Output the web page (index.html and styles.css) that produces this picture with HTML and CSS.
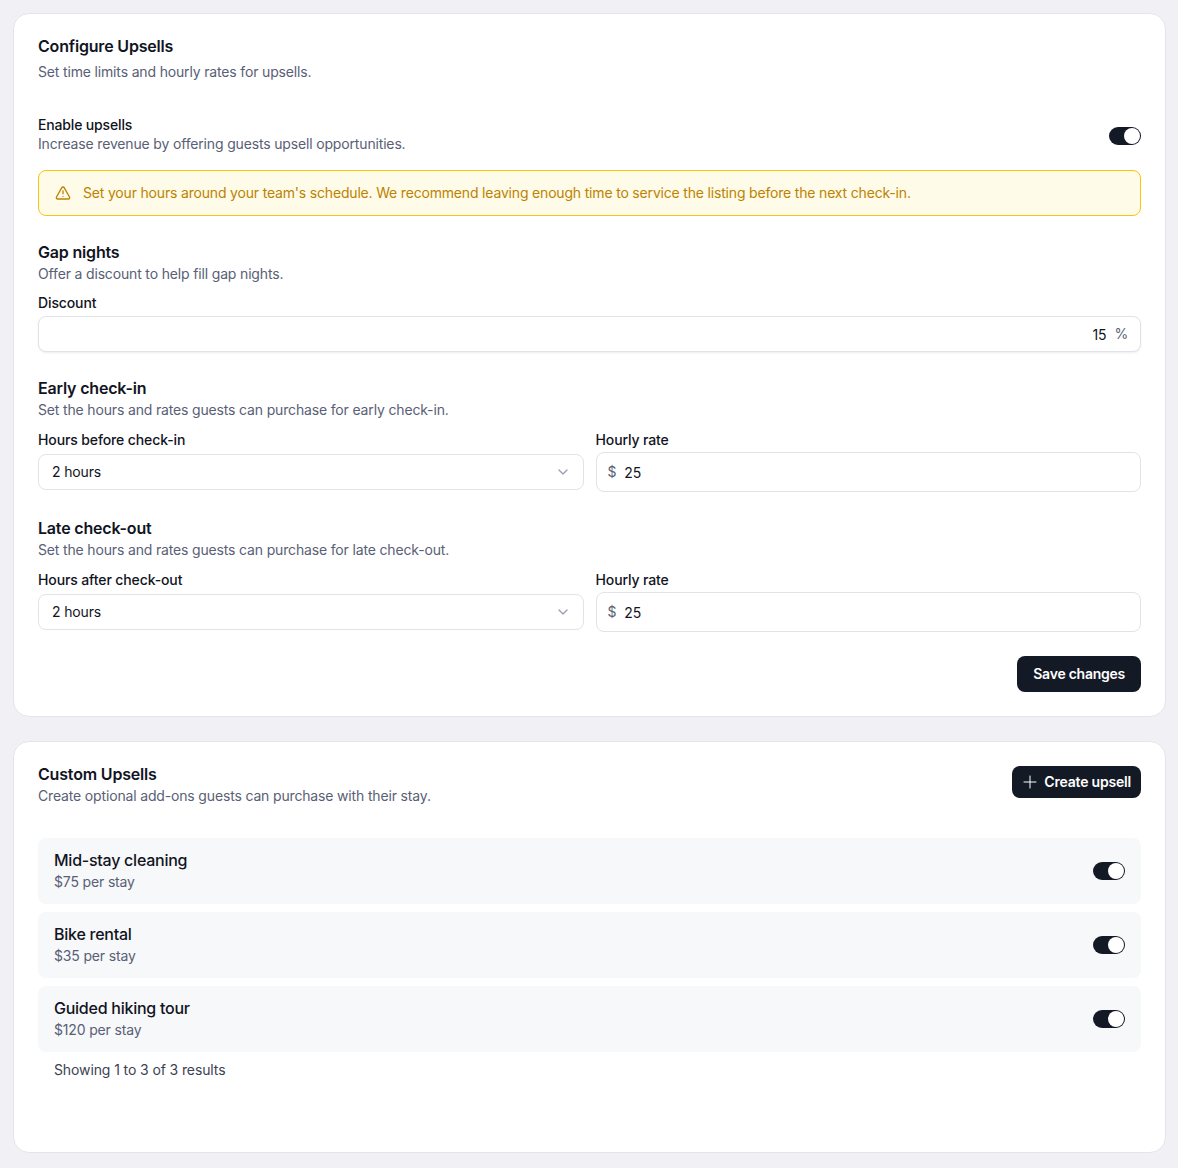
FILE: index.html
```html
<!DOCTYPE html>
<html lang="en">
<head>
  <meta charset="UTF-8">
  <meta name="viewport" content="width=device-width, initial-scale=1.0">
  <title>Upsells</title>
  <link rel="stylesheet" href="styles.css">
</head>
<body>
  <div class="card card-config">
    <div class="card-title">Configure Upsells</div>
    <div class="card-desc">Set time limits and hourly rates for upsells.</div>

    <div class="enable-row">
      <div>
        <div class="enable-title">Enable upsells</div>
        <div class="muted">Increase revenue by offering guests upsell opportunities.</div>
      </div>
      <span class="toggle toggle-enable"><span class="knob"></span></span>
    </div>

    <div class="alert">
      <svg class="alert-icon" width="16" height="16" viewBox="0 0 24 24" fill="none" stroke="currentColor" stroke-width="2" stroke-linecap="round" stroke-linejoin="round">
        <path d="M21.73 18l-8-14a2 2 0 0 0-3.48 0l-8 14A2 2 0 0 0 4 21h16a2 2 0 0 0 1.73-3z"></path>
        <path d="M12 9v4"></path>
        <path d="M12 17h.01"></path>
      </svg>
      <span>Set your hours around your team's schedule. We recommend leaving enough time to service the listing before the next check-in.</span>
    </div>

    <div class="section">
      <div class="section-title">Gap nights</div>
      <div class="muted">Offer a discount to help fill gap nights.</div>
      <div class="label">Discount</div>
      <div class="input input-discount">
        <span class="value value-low">15</span>
        <span class="unit">%</span>
      </div>
    </div>

    <div class="section">
      <div class="section-title">Early check-in</div>
      <div class="muted">Set the hours and rates guests can purchase for early check-in.</div>
      <div class="field-grid">
        <div>
          <div class="label label-select">Hours before check-in</div>
          <div class="select">
            <span class="value">2 hours</span>
            <svg class="chevron" width="16" height="16" viewBox="0 0 24 24" fill="none" stroke="currentColor" stroke-width="2" stroke-linecap="round" stroke-linejoin="round"><path d="M6 9l6 6 6-6"></path></svg>
          </div>
        </div>
        <div>
          <div class="label label-rate">Hourly rate</div>
          <div class="input input-rate">
            <span class="unit">$</span>
            <span class="value value-low">25</span>
          </div>
        </div>
      </div>
    </div>

    <div class="section">
      <div class="section-title">Late check-out</div>
      <div class="muted">Set the hours and rates guests can purchase for late check-out.</div>
      <div class="field-grid">
        <div>
          <div class="label label-select">Hours after check-out</div>
          <div class="select">
            <span class="value">2 hours</span>
            <svg class="chevron" width="16" height="16" viewBox="0 0 24 24" fill="none" stroke="currentColor" stroke-width="2" stroke-linecap="round" stroke-linejoin="round"><path d="M6 9l6 6 6-6"></path></svg>
          </div>
        </div>
        <div>
          <div class="label label-rate">Hourly rate</div>
          <div class="input input-rate">
            <span class="unit">$</span>
            <span class="value value-low">25</span>
          </div>
        </div>
      </div>
    </div>

    <div class="actions">
      <button class="btn btn-save">Save changes</button>
    </div>
  </div>

  <div class="card card-custom">
    <div class="custom-head">
      <div>
        <div class="card-title">Custom Upsells</div>
        <div class="muted">Create optional add-ons guests can purchase with their stay.</div>
      </div>
      <button class="btn btn-create">
        <svg class="plus" width="16" height="16" viewBox="0 0 24 24" fill="none" stroke="currentColor" stroke-width="1.5" stroke-linecap="round"><path d="M12 3v18"></path><path d="M3 12h18"></path></svg>
        Create upsell
      </button>
    </div>

    <div class="upsell-list">
      <div class="upsell">
        <div>
          <div class="upsell-name">Mid-stay cleaning</div>
          <div class="muted">$75 per stay</div>
        </div>
        <span class="toggle"><span class="knob"></span></span>
      </div>
      <div class="upsell">
        <div>
          <div class="upsell-name">Bike rental</div>
          <div class="muted">$35 per stay</div>
        </div>
        <span class="toggle"><span class="knob"></span></span>
      </div>
      <div class="upsell">
        <div>
          <div class="upsell-name">Guided hiking tour</div>
          <div class="muted">$120 per stay</div>
        </div>
        <span class="toggle"><span class="knob"></span></span>
      </div>
    </div>
    <div class="results">Showing 1 to 3 of 3 results</div>
  </div>
</body>
</html>
```

FILE: styles.css
```css
* {
  box-sizing: border-box;
}
body {
  font-family: Inter, "Liberation Sans", sans-serif;
  font-size: 14px;
  line-height: 20px;
  letter-spacing: -0.16px;
  color: #111422;
  background-color: #f0f0f5;
  margin: 0;
  padding: 13px 12px 15px 13px;
}
.card {
  background-color: #fff;
  border: 1px solid #e4e4ea;
  border-radius: 16px;
  padding: 0 24px;
}
.card-config {
  height: 704px;
  padding-top: 20px;
}
.card-custom {
  height: 412px;
  margin-top: 24px;
  padding-top: 20px;
}
.card-title {
  font-size: 16px;
  line-height: 24px;
  font-weight: 600;
  letter-spacing: -0.18px;
}
.card-desc {
  color: #596075;
  margin-top: 4px;
}
.muted {
  color: #596075;
}
.enable-row {
  display: flex;
  align-items: center;
  justify-content: space-between;
  margin-top: 34px;
}
.enable-title {
  font-weight: 500;
  color: #111422;
  line-height: 18px;
}
.alert {
  display: flex;
  align-items: center;
  gap: 12px;
  height: 46px;
  margin-top: 16px;
  padding: 0 16px;
  letter-spacing: -0.18px;
  color: #bd8200;
  background-color: #fefbe8;
  border: 1px solid #f5c60b;
  border-radius: 8px;
}
.alert-icon {
  flex-shrink: 0;
}
.section {
  margin-top: 24px;
}
.section-title {
  font-size: 16px;
  line-height: 24px;
  font-weight: 600;
  letter-spacing: -0.18px;
}
.label {
  font-weight: 500;
  letter-spacing: -0.12px;
  margin-top: 9px;
  margin-bottom: 3px;
}
.label-select {
  margin-top: 10px;
  margin-bottom: 4px;
}
.label-rate {
  margin-top: 10px;
  margin-bottom: 2px;
}
.input, .select {
  display: flex;
  align-items: center;
  background-color: #fff;
  border: 1px solid #e2e3e9;
  border-radius: 8px;
}
.input-discount {
  height: 36px;
  justify-content: flex-end;
  gap: 8px;
  padding: 0 12px;
  box-shadow: 0 1px 2px rgba(17, 20, 34, 0.08);
}
.input-rate {
  height: 40px;
  gap: 8px;
  padding: 0 11px;
}
.select {
  height: 36px;
  justify-content: space-between;
  padding: 0 12px 0 13px;
}
.value-low {
  padding-top: 2px;
}
.unit {
  color: #596075;
}
.chevron {
  color: #9a9fae;
}
.field-grid {
  display: grid;
  grid-template-columns: 1fr 1fr;
  column-gap: 12px;
}
.actions {
  display: flex;
  justify-content: flex-end;
  margin-top: 24px;
}
.btn {
  font-family: inherit;
  font-size: 14px;
  font-weight: 600;
  letter-spacing: -0.2px;
  color: #fff;
  background-color: #141926;
  border: none;
  border-radius: 8px;
  cursor: pointer;
}
.btn-save {
  height: 36px;
  padding: 0 16px 2px;
  letter-spacing: -0.25px;
}
.btn-create {
  display: flex;
  align-items: center;
  gap: 6px;
  height: 32px;
  margin-top: 4px;
  padding: 0 10px 2px;
}
.plus {
  margin-top: 2px;
}
.custom-head {
  display: flex;
  justify-content: space-between;
  align-items: flex-start;
}
.upsell-list {
  display: flex;
  flex-direction: column;
  gap: 8px;
  margin-top: 32px;
}
.upsell {
  display: flex;
  align-items: center;
  justify-content: space-between;
  height: 66px;
  padding: 0 16px;
  background-color: #f7f8fa;
  border-radius: 8px;
}
.upsell > div {
  margin-top: -2px;
}
.upsell-name {
  font-size: 16px;
  line-height: 24px;
  font-weight: 500;
  letter-spacing: -0.25px;
}
.results {
  color: #3c4254;
  letter-spacing: -0.11px;
  margin-top: 8px;
  padding-left: 16px;
}
.toggle {
  display: flex;
  justify-content: flex-end;
  width: 32px;
  height: 18px;
  padding: 1px;
  background-color: #141926;
  border-radius: 9px;
  flex-shrink: 0;
}
.toggle-enable {
  margin-top: 2px;
}
.knob {
  display: block;
  width: 16px;
  height: 16px;
  background-color: #fff;
  border-radius: 50%;
}
```
